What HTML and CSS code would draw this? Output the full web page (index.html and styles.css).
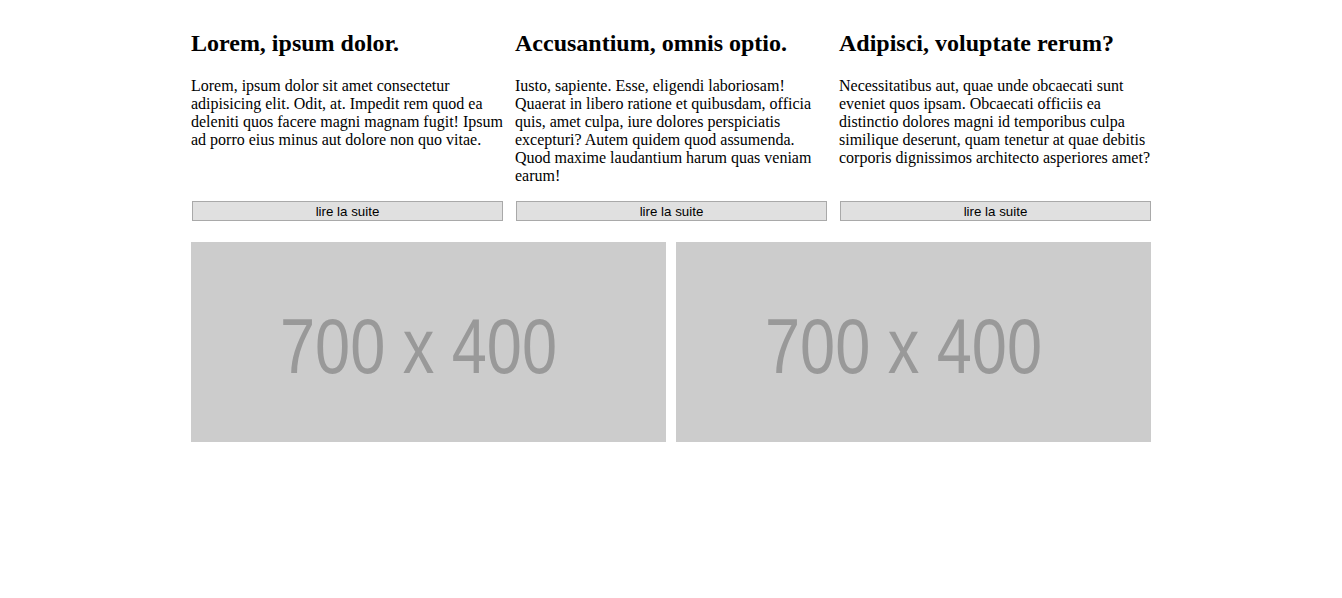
FILE: index.html
```html
<!DOCTYPE html>
<html lang="fr">
<head>
<meta charset="utf-8">
<title>Articles</title>
<link rel="stylesheet" href="styles.css">
</head>
<body>
<div class="container">
  <div class="articles">
    <div class="article">
      <h2>Lorem, ipsum dolor.</h2>
      <p>Lorem, ipsum dolor sit amet consectetur adipisicing elit. Odit, at. Impedit rem quod ea deleniti quos facere magni magnam fugit! Ipsum ad porro eius minus aut dolore non quo vitae.</p>
      <button class="more">lire la suite</button>
    </div>
    <div class="article">
      <h2>Accusantium, omnis optio.</h2>
      <p>Iusto, sapiente. Esse, eligendi laboriosam! Quaerat in libero ratione et quibusdam, officia quis, amet culpa, iure dolores perspiciatis excepturi? Autem quidem quod assumenda. Quod maxime laudantium harum quas veniam earum!</p>
      <button class="more">lire la suite</button>
    </div>
    <div class="article">
      <h2>Adipisci, voluptate rerum?</h2>
      <p>Necessitatibus aut, quae unde obcaecati sunt eveniet quos ipsam. Obcaecati officiis ea distinctio dolores magni id temporibus culpa similique deserunt, quam tenetur at quae debitis corporis dignissimos architecto asperiores amet?</p>
      <button class="more">lire la suite</button>
    </div>
  </div>
  <div class="pictures">
    <div class="picture">
      <svg class="ph" viewBox="0 0 475 200" width="475" height="200" role="img" aria-label="700 x 400">
        <rect width="475" height="200" fill="#cccccc"/>
        <text x="89" y="131" font-family="Liberation Sans, Arial, sans-serif" font-size="77" fill="#999999" textLength="277" lengthAdjust="spacingAndGlyphs">700 x 400</text>
      </svg>
    </div>
    <div class="picture">
      <svg class="ph" viewBox="0 0 475 200" width="475" height="200" role="img" aria-label="700 x 400">
        <rect width="475" height="200" fill="#cccccc"/>
        <text x="89" y="131" font-family="Liberation Sans, Arial, sans-serif" font-size="77" fill="#999999" textLength="277" lengthAdjust="spacingAndGlyphs">700 x 400</text>
      </svg>
    </div>
  </div>
</div>
</body>
</html>
```

FILE: styles.css
```css
body {
  margin: 8px;
  font-family: "Liberation Serif", "Times New Roman", serif;
  font-size: 16px;
  color: #000;
  background: #fff;
}

.container {
  width: 960px;
  margin: 0 auto;
}

.articles {
  display: flex;
  gap: 12px;
}

.article {
  flex: 1 1 0;
  display: flex;
  flex-direction: column;
  min-width: 0;
}

.article h2 {
  font-size: 24px;
  font-weight: bold;
  margin: 22px 0 20px;
}

.article p {
  flex: 1 1 auto;
  margin: 0 0 16px;
}

.more {
  display: block;
  width: calc(100% - 1px);
  margin-left: 1px;
  height: 20px;
  padding: 0;
  font-family: "Liberation Sans", Arial, sans-serif;
  font-size: 13.33px;
  color: #000;
  background: #e0e0e0;
  border: 1px solid #a9a9a9;
  border-radius: 0;
}

.pictures {
  display: flex;
  gap: 10px;
  margin-top: 21px;
}

.picture {
  width: 475px;
  height: 200px;
}

.ph {
  display: block;
}
```
